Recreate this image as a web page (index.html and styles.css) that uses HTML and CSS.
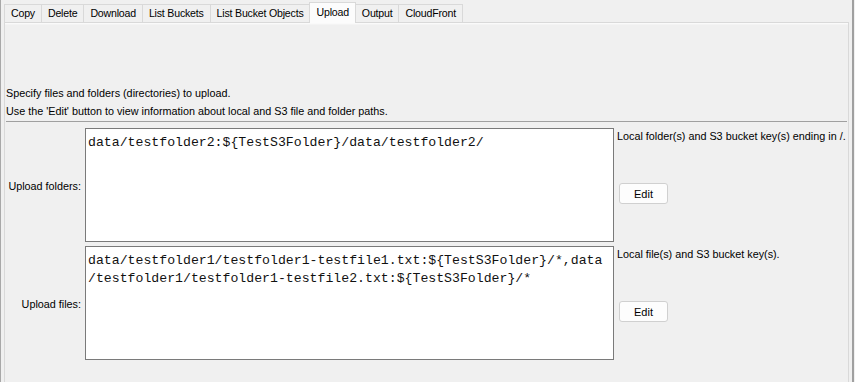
FILE: index.html
```html
<!DOCTYPE html>
<html lang="en">
<head>
  <meta charset="UTF-8" />
  <title>S3 Upload</title>
  <link rel="stylesheet" href="styles.css">
</head>
<body>
  <div class="window">
    <div class="tabs">
      <div class="tab">Copy</div>
      <div class="tab">Delete</div>
      <div class="tab">Download</div>
      <div class="tab">List Buckets</div>
      <div class="tab">List Bucket Objects</div>
      <div class="tab selected">Upload</div>
      <div class="tab">Output</div>
      <div class="tab">CloudFront</div>
    </div>

    <div class="panel">
      <div class="intro">
        <p>Specify files and folders (directories) to upload.</p>
        <p>Use the 'Edit' button to view information about local and S3 file and folder paths.</p>
      </div>
      <div class="separator"></div>

      <div class="form">
        <!-- folders -->
        <label class="field-label">Upload folders:</label>
        <div class="text-area">
          <div class="line">data/testfolder2:${TestS3Folder}/data/testfolder2/</div>
        </div>
        <div class="side">
          <p class="hint">Local folder(s) and S3 bucket key(s) ending in /.</p>
          <button class="edit-btn">Edit</button>
        </div>

        <!-- files -->
        <label class="field-label">Upload files:</label>
        <div class="text-area">
          <div class="line">data/testfolder1/testfolder1-testfile1.txt:${TestS3Folder}/*,data</div>
          <div class="line">/testfolder1/testfolder1-testfile2.txt:${TestS3Folder}/*</div>
        </div>
        <div class="side">
          <p class="hint">Local file(s) and S3 bucket key(s).</p>
          <button class="edit-btn">Edit</button>
        </div>
      </div>
    </div>
  </div>
</body>
</html>
```

FILE: styles.css
```css
html, body {
  margin: 0;
  height: 100%;
}

body {
  background: #f0f0f0;
  font-family: "Liberation Sans", Arial, sans-serif;
  font-size: 10.8px;
  color: #000;
  overflow: hidden;
}

.window {
  height: 100%;
  box-sizing: border-box;
  padding: 2px 4px 0 3px;
  border-left: 1px solid #a8a8a8;
  border-right: 2px solid #a0a0a0;
  width: 854px;
}

.tabs {
  display: flex;
  align-items: flex-end;
  height: 20px;
}

.tab {
  height: 17px;
  line-height: 17px;
  padding: 0 6px;
  border: 1px solid #d9d9d9;
  border-bottom: none;
  margin-right: -1px;
  background: #f0f0f0;
  font-size: 10.6px;
  letter-spacing: -0.2px;
}

.tab.selected {
  height: 20px;
  line-height: 18px;
  background: #fcfcfc;
  position: relative;
  z-index: 1;
  margin-bottom: -1px;
}

.panel {
  border: 1px solid #d9d9d9;
  border-bottom: none;
  box-shadow: inset 0 1px 0 #fafafa, inset 0 2px 0 #f4f4f4;
  width: 845px;
  height: 360px;
  box-sizing: border-box;
  padding: 61px 2px 0 1px;
}

.intro p {
  margin: 0;
  line-height: 18px;
}

.separator {
  height: 1px;
  background: #a0a0a0;
  margin: 1px 0 6px 0;
  width: 841px;
}

.form {
  display: grid;
  grid-template-columns: 77px 529px 1fr;
  grid-auto-rows: 114px;
  column-gap: 2px;
  row-gap: 4px;
}

.field-label {
  align-self: center;
  text-align: right;
  padding-right: 2px;
  padding-top: 1px;
}

.text-area {
  background: #fff;
  border: 1px solid #7a7a7a;
  padding: 5px 2px 0 2px;
  font-family: "Liberation Mono", "Courier New", monospace;
  font-size: 13.2px;
  color: #111;
}

.line {
  line-height: 18px;
  white-space: pre;
}

.side {
  display: flex;
  flex-direction: column;
  align-items: flex-start;
}

.hint {
  margin: 1px 0 0 1px;
  line-height: 14px;
  white-space: nowrap;
}

.edit-btn {
  margin: 40px 0 0 3px;
  width: 49px;
  height: 21px;
  font-family: inherit;
  font-size: 11px;
  background: #fdfdfd;
  border: 1px solid #d0d0d0;
  border-radius: 3px;
  padding: 0;
  color: #000;
}
```
